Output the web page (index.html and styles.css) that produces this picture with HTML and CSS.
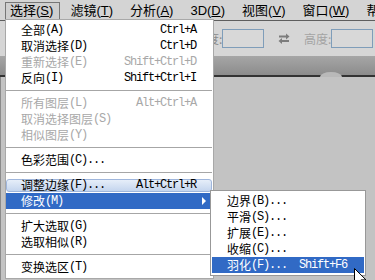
FILE: index.html
```html
<!DOCTYPE html>
<html lang="zh-CN">
<head>
<meta charset="utf-8">
<title>选择菜单</title>
<link rel="stylesheet" href="styles.css">
</head>
<body>
<div class="app">
  <nav class="menubar">
    <div class="mb-item open">选择<span class="al">(<u>S</u>)</span></div>
    <div class="mb-item">滤镜<span class="al">(<u>T</u>)</span></div>
    <div class="mb-item">分析<span class="al">(<u>A</u>)</span></div>
    <div class="mb-item"><span class="al">3D(<u>D</u>)</span></div>
    <div class="mb-item">视图<span class="al">(<u>V</u>)</span></div>
    <div class="mb-item">窗口<span class="al">(<u>W</u>)</span></div>
    <div class="mb-item">帮助<span class="al">(<u>H</u>)</span></div>
  </nav>
  <div class="optbar">
    <span class="lbl">宽度:</span>
    <span class="field"></span>
    <svg class="swap" width="12" height="11" viewBox="0 0 12 11">
      <path d="M1 3.5H9" stroke="#7c7c7c" stroke-width="2"/>
      <path d="M8 0.5L11.5 3.5L8 6.5Z" fill="#7c7c7c"/>
      <path d="M3 8H11" stroke="#7c7c7c" stroke-width="2"/>
      <path d="M4 5L0.5 8L4 11Z" fill="#7c7c7c"/>
    </svg>
    <span class="lbl dim">高度:</span>
    <span class="field"></span>
  </div>
  <div class="band"><span class="bump"></span></div>
  <div class="canvas"></div>

  <div class="menu main">
    <div class="mi">全部<span class="m">(A)</span><span class="sc">Ctrl+A</span></div>
    <div class="mi">取消选择<span class="m">(D)</span><span class="sc">Ctrl+D</span></div>
    <div class="mi off">重新选择<span class="m">(E)</span><span class="sc">Shift+Ctrl+D</span></div>
    <div class="mi">反向<span class="m">(I)</span><span class="sc">Shift+Ctrl+I</span></div>
    <div class="sep"></div>
    <div class="mi off">所有图层<span class="m">(L)</span><span class="sc">Alt+Ctrl+A</span></div>
    <div class="mi off">取消选择图层<span class="m">(S)</span></div>
    <div class="mi off">相似图层<span class="m">(Y)</span></div>
    <div class="sep"></div>
    <div class="mi">色彩范围<span class="m">(C)...</span></div>
    <div class="sep"></div>
    <div class="mi soft">调整边缘<span class="m">(F)...</span><span class="sc">Alt+Ctrl+R</span></div>
    <div class="mi sel">修改<span class="m">(M)</span><span class="arrow"></span></div>
    <div class="sep"></div>
    <div class="mi">扩大选取<span class="m">(G)</span></div>
    <div class="mi">选取相似<span class="m">(R)</span></div>
    <div class="sep"></div>
    <div class="mi">变换选区<span class="m">(T)</span></div>
  </div>

  <div class="menu sub">
    <div class="mi">边界<span class="m">(B)...</span></div>
    <div class="mi">平滑<span class="m">(S)...</span></div>
    <div class="mi">扩展<span class="m">(E)...</span></div>
    <div class="mi">收缩<span class="m">(C)...</span></div>
    <div class="mi sel">羽化<span class="m">(F)...</span><span class="sc">Shift+F6</span></div>
  </div>

  <svg class="cursor" width="13" height="20" viewBox="0 0 13 20">
    <path d="M0.5 0.5V16.5L4.5 12.8L7.2 19L9.6 18L7 11.9H12Z" fill="#fff" stroke="#000" stroke-width="1" stroke-linejoin="miter"/>
  </svg>
</div>
</body>
</html>
```

FILE: styles.css
```css
* {
  box-sizing: border-box;
  margin: 0;
  padding: 0;
}

html,
body {
  width: 375px;
  height: 280px;
  overflow: hidden;
}

body {
  background: #c3c3c3;
  color: #000;
  font-family: "Noto Sans CJK SC", sans-serif;
  font-size: 12px;
}

.app {
  position: relative;
  width: 375px;
  height: 280px;
  overflow: hidden;
  display: flex;
  flex-direction: column;
}

/* ---------- menu bar ---------- */
.menubar {
  flex: none;
  height: 21px;
  display: flex;
  align-items: flex-start;
  padding: 2px 0 0 5px;
  background: #d4d4d4;
  border-bottom: 1px solid #5e5e5e;
  white-space: nowrap;
  font-family: "Liberation Sans", "Noto Sans CJK SC", sans-serif;
  font-size: 13px;
}

.mb-item {
  flex: none;
  height: 17px;
  line-height: 16px;
  padding: 0 6px 0 4px;
  margin-right: 5px;
  border: 1px solid transparent;
  border-bottom: none;
}

.mb-item.open {
  border-color: #767676;
  background: #cfcfcf;
}

.al u {
  text-decoration: underline;
  text-underline-offset: 1px;
}

/* ---------- options bar ---------- */
.optbar {
  flex: none;
  height: 35px;
  display: flex;
  align-items: center;
  padding-left: 195px;
  background: #d6d6d6;
  white-space: nowrap;
}

.lbl {
  flex: none;
  width: 26px;
  text-align: right;
  color: #8a8a8a;
  font-size: 12px;
  line-height: 14px;
}

.lbl.dim {
  color: #a4a4a4;
  margin-left: 14px;
  text-align: left;
}

.field {
  flex: none;
  width: 42px;
  height: 19px;
  margin-left: 1px;
  border: 1px solid #7f9db9;
  background: #d8d8d8;
}

.swap {
  flex: none;
  margin-left: 14px;
  display: block;
}

/* ---------- document tab band ---------- */
.band {
  position: relative;
  flex: none;
  height: 21px;
  background: linear-gradient(#a6a6a6, #8c8c8c);
  border-bottom: 2px solid #333;
}

.bump {
  position: absolute;
  left: 320px;
  bottom: -2px;
  width: 22px;
  height: 5px;
  border-radius: 50% 50% 0 0 / 100% 100% 0 0;
  background: #b9b9b9;
}

.canvas {
  flex: 1;
  background: #c3c3c3;
  border-left: 1px solid #8a8a8a;
}

/* ---------- menus ---------- */
.menu {
  position: absolute;
  background: #fff;
  font-family: "Noto Sans CJK SC", sans-serif;
  font-size: 12px;
  white-space: nowrap;
  z-index: 2;
}

.menu.main {
  left: 5px;
  top: 19px;
  width: 209px;
  height: 260px;
  padding: 2px 0 3px 0;
  border: 1px solid #a8a8a8;
}

.menu.sub {
  left: 210px;
  top: 190px;
  width: 156px;
  height: 86px;
  padding: 2px 0;
  border: 1px solid #989898;
  z-index: 3;
}

.mi {
  position: relative;
  display: flex;
  align-items: center;
  height: 16px;
  line-height: 16px;
  padding: 0 16px 0 15px;
  margin-right: 1px;
}

.menu.sub .mi {
  margin: 0 1px;
  padding: 0 17px 0 15px;
}

.m,
.sc {
  font-family: "Liberation Mono", monospace;
  font-size: 12px;
  letter-spacing: -1.2px;
}

.sc {
  margin-left: auto;
}

.mi.off {
  color: #a8a8a8;
}

/* soft hover highlight drawn behind the row text */
.mi.soft::before {
  content: "";
  position: absolute;
  left: 0;
  right: 0;
  top: 2px;
  bottom: 1px;
  border: 1px solid #9fb6dc;
  border-radius: 3px;
  background: linear-gradient(#e6eef9, #c4d5ee);
  z-index: -1;
}

.mi.sel {
  background: #316ac5;
  color: #fff;
}

.arrow {
  margin-left: auto;
  margin-right: -10px;
  width: 0;
  height: 0;
  border-left: 4px solid #fff;
  border-top: 4px solid transparent;
  border-bottom: 4px solid transparent;
}

.sep {
  height: 0;
  margin: 4px 1px 4px 0;
  border-top: 1px solid #a6a6a6;
}

.cursor {
  position: absolute;
  left: 354px;
  top: 268px;
  z-index: 4;
}
```
